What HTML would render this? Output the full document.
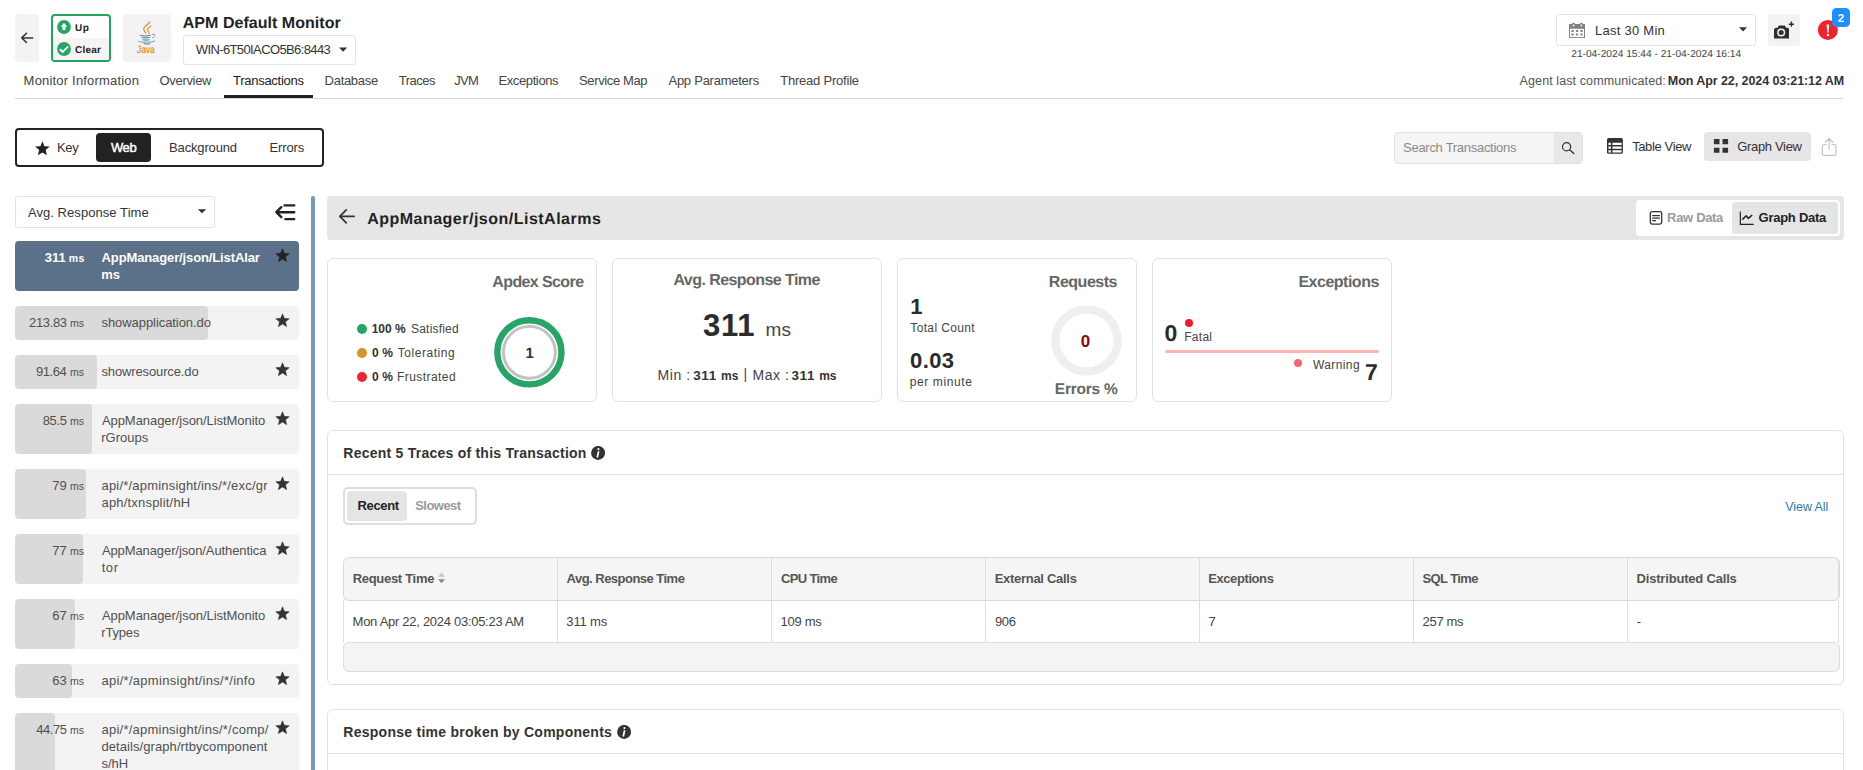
<!DOCTYPE html>
<html lang="en">
<head>
<meta charset="utf-8">
<title>APM Default Monitor - Transactions</title>
<style>
html,body{margin:0;padding:0;background:#fff;}
body{width:1863px;height:770px;overflow:hidden;position:relative;font-family:"Liberation Sans",Arial,sans-serif;font-size:13px;color:#333;}
#root{position:absolute;left:0;top:0;width:1863px;height:770px;overflow:hidden;background:#fff;}
#root div,#root span,#root svg{position:absolute;box-sizing:border-box;}
header,nav,aside,main,section{display:block;}
.t{white-space:nowrap;line-height:20px;height:20px;}
.box{border:1px solid #e3e3e3;border-radius:3px;background:#fff;}
.grey{background:#f3f3f3;border-radius:3px;}
.card{border:1px solid #e2e2e2;border-radius:6px;background:#fff;}
.item{background:#f3f3f3;border-radius:4px;overflow:hidden;}
.item .bar{left:0;top:0;bottom:0;background:#dadada;border-radius:4px;}
.item.sel{background:#5a7189;}
.dot{border-radius:50%;}
.vline{width:1px;background:#ddd;}
.hline{height:1px;background:#ddd;}

</style>
</head>
<body>
<div id="root">

<header>
  <!-- back button -->
  <div class="grey" style="left:15px;top:14px;width:24px;height:48px;"></div>
  <svg style="left:20px;top:31px;" width="14" height="14" viewBox="0 0 14 14"><path d="M12.700 6.900H2M6.500 2.300L1.700 6.900l4.800 4.600" fill="none" stroke="#333" stroke-width="1.500" stroke-linecap="round" stroke-linejoin="round"/></svg>

  <!-- status box -->
  <div style="left:51px;top:14px;width:60px;height:48px;border:2px solid #21a55e;border-radius:4px;background:#fff;overflow:hidden;">
    <div style="left:0;top:22px;width:56px;height:22px;background:#f4f4f4;"></div>
  </div>
  <svg style="left:57px;top:20px;" width="14" height="14" viewBox="0 0 14 14"><circle cx="7" cy="7" r="6.9" fill="#27a565"/><path d="M7 2.9l3.3 3.6H8.5v3.6h-3V6.5H3.7z" fill="#fff"/></svg>
  <svg style="left:57px;top:42px;" width="14" height="14" viewBox="0 0 14 14"><circle cx="7" cy="7" r="6.9" fill="#27a565"/><path d="M2.900 7.300l2.800 2.700 5.500-5.600" fill="none" stroke="#fff" stroke-width="1.900"/></svg>

  <!-- java logo -->
  <div class="grey" style="left:123px;top:14px;width:48px;height:48px;border-radius:4px;"></div>
  <svg style="left:135px;top:20px;" width="24" height="26" viewBox="0 0 24 26">
    <path d="M14.700 1.900C13.600 4.600 8.500 6.300 8.700 9.300c.100 1.700 2 2.400 1.900 3.900" fill="none" stroke="#e8912a" stroke-width="1.300" stroke-linecap="round"/>
    <path d="M16 6.100c-2 1.200-3.800 2.500-3.400 4.100.300 1.200 1.600 2 1.300 3.400" fill="none" stroke="#e8912a" stroke-width="1.200" stroke-linecap="round"/>
    <path d="M5.300 15.300c2.800.700 7.400.700 10.100-.100M7 17.500c2.300.500 5.400.500 7.700 0M8 19.700c1.900.500 4.100.500 6 0M9 23.700c1.900.400 4.100.400 6 0" fill="none" stroke="#4f86a8" stroke-width="1.100" stroke-linecap="round"/>
    <path d="M3.300 21.300c3 1.300 13 1.400 16.400-.200M17.400 14.300c3-1 3.800 1.700.100 3.500" fill="none" stroke="#6aa0a8" stroke-width="1" stroke-linecap="round"/>
  </svg>

  <!-- host dropdown -->
  <div class="box" style="left:183px;top:35px;width:173px;height:30px;"></div>
  <svg style="left:338px;top:47px;" width="10" height="6" viewBox="0 0 10 6"><path d="M1 .5h8.200L5.100 4.700z" fill="#333"/></svg>

  <!-- date dropdown -->
  <div class="box" style="left:1556px;top:14px;width:200px;height:32px;"></div>
  <svg style="left:1569px;top:23px;" width="16" height="15" viewBox="0 0 16 15">
    <path d="M0 1h3.200V0h2.800v1h5V0h2.800v1H16v14H0z" fill="#828282"/>
    <rect x="1" y="5.800" width="14" height="8.300" fill="#fff"/>
    <circle cx="4.600" cy="2.400" r=".900" fill="#fff"/><circle cx="12.400" cy="2.400" r=".900" fill="#fff"/>
    <path d="M2.400 7h2.300v2.100H2.400zM6.900 7h2.300v2.100H6.900zM11.400 7h2.300v2.100h-2.300zM2.400 10.500h2.300v2.100H2.400zM6.900 10.500h2.300v2.100H6.900zM11.400 10.500h2.300v2.100h-2.300z" fill="#868686"/>
  </svg>
  <svg style="left:1738px;top:27px;" width="10" height="6" viewBox="0 0 10 6"><path d="M1 .300h8L5 4.600z" fill="#333"/></svg>

  <!-- camera button -->
  <div class="grey" style="left:1768px;top:14px;width:32px;height:32px;"></div>
  <svg style="left:1773px;top:21px;" width="22" height="19" viewBox="0 0 22 19">
    <path d="M1 8.300l1.600-1.500h2L5.800 4.400h6l1.300 2.400H15.100l.900.900v9.900H1z" fill="#2e2e2e"/>
    <circle cx="8.200" cy="11.500" r="4" fill="#f3f3f3"/><circle cx="8.200" cy="11.500" r="2.500" fill="#2e2e2e"/>
    <path d="M18.400.600v5.200M15.800 3.200H21" stroke="#2e2e2e" stroke-width="1.400"/>
  </svg>

  <!-- alarm bubble -->
  <svg style="left:1816px;top:18px;" width="24" height="24" viewBox="0 0 24 24"><circle cx="11.900" cy="11.900" r="10" fill="#f0222e"/><path d="M10.600 6.600h2.600l-.650 7.800h-1.300z" fill="#fff"/><circle cx="11.900" cy="16.900" r="1.250" fill="#fff"/></svg>
  <div style="left:1832px;top:8px;width:18px;height:19px;border-radius:4.500px;background:#1e90ff;"></div>
  <span class="t" style="left:182.78px;top:14px;font-size:16px;color:#222;font-weight:700;letter-spacing:0.035px;text-rendering:geometricPrecision;">APM Default Monitor</span>
  <span class="t" style="left:195.82px;top:40px;font-size:13px;color:#333;letter-spacing:-0.618px;">WIN-6T50IACO5B6:8443</span>
  <span class="t" style="left:74.88px;top:19px;font-size:10px;color:#222;font-weight:700;letter-spacing:0.715px;text-rendering:geometricPrecision;">Up</span>
  <span class="t" style="left:75.09px;top:41px;font-size:10px;color:#222;font-weight:700;letter-spacing:0.215px;text-rendering:geometricPrecision;">Clear</span>
  <span class="t" style="left:137.30px;top:40px;font-size:10.5px;color:#e8931c;letter-spacing:-0.017px;text-rendering:geometricPrecision;transform:scaleX(.800);transform-origin:0 0;-webkit-text-stroke:.300px #e8931c;">Java</span>
  <span class="t" style="left:1595.11px;top:21px;font-size:13px;color:#333;letter-spacing:0.248px;">Last 30 Min</span>
  <span class="t" style="left:1571.22px;top:45px;font-size:10.2px;color:#444;text-rendering:geometricPrecision;">21-04-2024 15:44 - 21-04-2024 16:14</span>
  <span class="t" style="left:1837.72px;top:8px;font-size:11.5px;color:#fff;font-weight:700;">2</span>
</header>

<nav>
  <div class="hline" style="left:15px;top:98px;width:1828px;background:#d9d9d9;"></div>
  <div style="left:224px;top:95px;width:89px;height:3px;background:#222;"></div>
  <span class="t" style="left:23.61px;top:71px;font-size:13px;color:#444;letter-spacing:0.189px;">Monitor Information</span>
  <span class="t" style="left:159.44px;top:71px;font-size:13px;color:#444;letter-spacing:-0.301px;">Overview</span>
  <span class="t" style="left:233.04px;top:71px;font-size:13px;color:#222;letter-spacing:-0.278px;">Transactions</span>
  <span class="t" style="left:324.61px;top:71px;font-size:13px;color:#444;letter-spacing:-0.301px;">Database</span>
  <span class="t" style="left:398.84px;top:71px;font-size:13px;color:#444;letter-spacing:-0.525px;">Traces</span>
  <span class="t" style="left:454.25px;top:71px;font-size:13px;color:#444;letter-spacing:-0.699px;">JVM</span>
  <span class="t" style="left:498.41px;top:71px;font-size:13px;color:#444;letter-spacing:-0.379px;">Exceptions</span>
  <span class="t" style="left:579.09px;top:71px;font-size:13px;color:#444;letter-spacing:-0.382px;">Service Map</span>
  <span class="t" style="left:668.48px;top:71px;font-size:13px;color:#444;letter-spacing:-0.251px;">App Parameters</span>
  <span class="t" style="left:780.24px;top:71px;font-size:13px;color:#444;letter-spacing:-0.215px;">Thread Profile</span>
  <span class="t" style="left:1519.58px;top:71px;font-size:12.5px;color:#555;letter-spacing:0.102px;">Agent last communicated:</span>
  <span class="t" style="left:1667.86px;top:71px;font-size:12.5px;color:#333;font-weight:700;letter-spacing:-0.075px;">Mon Apr 22, 2024 03:21:12 AM</span>
</nav>

<section>
  <!-- filter group -->
  <div style="left:15px;top:128px;width:309px;height:39px;border:2px solid #222;border-radius:4px;background:#fff;"></div>
  <div style="left:96px;top:133px;width:55px;height:29px;border-radius:4px;background:#222;"></div>
  <svg style="left:33.800px;top:139.800px;" width="16.800" height="16.800" viewBox="0 0 16 16"><path d="M8 1.200l1.900 4.700 5.100.4-3.900 3.300 1.200 4.900L8 11.900l-4.300 2.600 1.200-4.900L1 6.300l5.100-.4z" fill="#222"/></svg>

  <!-- search -->
  <div style="left:1394px;top:132px;width:189px;height:32px;border:1px solid #e0e0e0;border-radius:4px;background:#f5f5f5;overflow:hidden;">
    <div style="left:159px;top:0;width:29px;height:30px;background:#e8e8e8;"></div>
  </div>
  <svg style="left:1561px;top:141px;" width="15" height="15" viewBox="0 0 15 15"><circle cx="5.600" cy="5.700" r="4.100" fill="none" stroke="#333" stroke-width="1.200"/><path d="M8.600 8.700l4.200 3.900" stroke="#333" stroke-width="1.300" stroke-linecap="round"/></svg>

  <!-- table view -->
  <svg style="left:1607px;top:138px;" width="16" height="16" viewBox="0 0 16 16"><rect x="0" y="0" width="15.900" height="15.800" rx="1.600" fill="#333"/><path d="M1.400 4.700h2.500v2.300H1.400zM5.400 4.700h9.200v2.300H5.400zM1.400 8.500h2.500v2.300H1.400zM5.400 8.500h9.200v2.300H5.400zM1.400 12.200h2.500v2.300H1.400zM5.400 12.200h9.200v2.300H5.400z" fill="#fff"/></svg>
  <!-- graph view -->
  <div style="left:1704px;top:132px;width:107px;height:29px;border-radius:4px;background:#e6e6e6;"></div>
  <svg style="left:1713px;top:138px;" width="16" height="16" viewBox="0 0 16 16"><path d="M.900 1.100h5.600v5.100H.900zM9.500 1.100h5.600v5.100H9.500zM.900 9.700h5.600v5.100H.900zM9.500 9.700h5.600v5.100H9.500z" fill="#333"/></svg>
  <!-- share -->
  <svg style="left:1821px;top:137px;" width="17" height="20" viewBox="0 0 17 20"><path d="M5.200 7.500H2.900c-.800 0-1.500.700-1.500 1.500v7.900c0 .800.700 1.500 1.500 1.500h10.500c.800 0 1.500-.700 1.500-1.500V9c0-.800-.700-1.500-1.500-1.500h-2.300M8.100 12.300V1.700M4.400 5.400l3.700-3.900 3.700 3.900" fill="none" stroke="#c2c2c2" stroke-width="1.200" stroke-linecap="round" stroke-linejoin="round"/></svg>
  <span class="t" style="left:56.91px;top:138px;font-size:13px;color:#333;letter-spacing:-0.255px;">Key</span>
  <span class="t" style="left:110.89px;top:138px;font-size:13px;color:#fff;letter-spacing:-0.331px;-webkit-text-stroke:.450px #fff;">Web</span>
  <span class="t" style="left:169.11px;top:138px;font-size:13px;color:#333;letter-spacing:-0.160px;">Background</span>
  <span class="t" style="left:269.51px;top:138px;font-size:13px;color:#333;letter-spacing:-0.127px;">Errors</span>
  <span class="t" style="left:1403.09px;top:138px;font-size:13px;color:#8a8a8a;letter-spacing:-0.286px;">Search Transactions</span>
  <span class="t" style="left:1632.14px;top:137px;font-size:13px;color:#333;letter-spacing:-0.372px;">Table View</span>
  <span class="t" style="left:1737.21px;top:137px;font-size:13px;color:#333;letter-spacing:-0.329px;">Graph View</span>
</section>

<aside>
  <div class="box" style="left:15px;top:196px;width:200px;height:32px;"></div>
  <svg style="left:197px;top:209px;" width="10" height="6" viewBox="0 0 10 6"><path d="M.800.300h8.400L5 4.300z" fill="#333"/></svg>
  <svg style="left:274px;top:203px;" width="23" height="19" viewBox="0 0 23 19"><path d="M10.600 2.400h9.600M2.600 9.200h17.600M11.400 16.100h8.800M7.300 4.200L2.300 9.200l5 5" fill="none" stroke="#222" stroke-width="2.400" stroke-linecap="round" stroke-linejoin="round"/></svg>

  <div class="item sel" style="left:15px;top:241px;width:284px;height:50px;"></div>
  <svg style="left:275.200px;top:248.2px;" width="15" height="15" viewBox="0 0 15 15"><path d="M7.50 0.80L9.35 5.35L14.25 5.71L10.50 8.87L11.67 13.64L7.50 11.05L3.33 13.64L4.50 8.87L0.75 5.71L5.65 5.35z" fill="#222" stroke="#222" stroke-width=".500" stroke-linejoin="round"/></svg>
  <div class="item" style="left:15px;top:306px;width:284px;height:33.6px;"><div class="bar" style="width:192.8px;"></div></div>
  <svg style="left:275.200px;top:313.2px;" width="15" height="15" viewBox="0 0 15 15"><path d="M7.50 0.80L9.35 5.35L14.25 5.71L10.50 8.87L11.67 13.64L7.50 11.05L3.33 13.64L4.50 8.87L0.75 5.71L5.65 5.35z" fill="#333" stroke="#333" stroke-width=".500" stroke-linejoin="round"/></svg>
  <div class="item" style="left:15px;top:355.2px;width:284px;height:33.5px;"><div class="bar" style="width:81.8px;"></div></div>
  <svg style="left:275.200px;top:362.4px;" width="15" height="15" viewBox="0 0 15 15"><path d="M7.50 0.80L9.35 5.35L14.25 5.71L10.50 8.87L11.67 13.64L7.50 11.05L3.33 13.64L4.50 8.87L0.75 5.71L5.65 5.35z" fill="#333" stroke="#333" stroke-width=".500" stroke-linejoin="round"/></svg>
  <div class="item" style="left:15px;top:404.2px;width:284px;height:49.6px;"><div class="bar" style="width:76.7px;"></div></div>
  <svg style="left:275.200px;top:411.4px;" width="15" height="15" viewBox="0 0 15 15"><path d="M7.50 0.80L9.35 5.35L14.25 5.71L10.50 8.87L11.67 13.64L7.50 11.05L3.33 13.64L4.50 8.87L0.75 5.71L5.65 5.35z" fill="#333" stroke="#333" stroke-width=".500" stroke-linejoin="round"/></svg>
  <div class="item" style="left:15px;top:469.2px;width:284px;height:49.6px;"><div class="bar" style="width:70.7px;"></div></div>
  <svg style="left:275.200px;top:476.4px;" width="15" height="15" viewBox="0 0 15 15"><path d="M7.50 0.80L9.35 5.35L14.25 5.71L10.50 8.87L11.67 13.64L7.50 11.05L3.33 13.64L4.50 8.87L0.75 5.71L5.65 5.35z" fill="#333" stroke="#333" stroke-width=".500" stroke-linejoin="round"/></svg>
  <div class="item" style="left:15px;top:534.2px;width:284px;height:49.6px;"><div class="bar" style="width:67.6px;"></div></div>
  <svg style="left:275.200px;top:541.4px;" width="15" height="15" viewBox="0 0 15 15"><path d="M7.50 0.80L9.35 5.35L14.25 5.71L10.50 8.87L11.67 13.64L7.50 11.05L3.33 13.64L4.50 8.87L0.75 5.71L5.65 5.35z" fill="#333" stroke="#333" stroke-width=".500" stroke-linejoin="round"/></svg>
  <div class="item" style="left:15px;top:599.2px;width:284px;height:49.6px;"><div class="bar" style="width:59.8px;"></div></div>
  <svg style="left:275.200px;top:606.4px;" width="15" height="15" viewBox="0 0 15 15"><path d="M7.50 0.80L9.35 5.35L14.25 5.71L10.50 8.87L11.67 13.64L7.50 11.05L3.33 13.64L4.50 8.87L0.75 5.71L5.65 5.35z" fill="#333" stroke="#333" stroke-width=".500" stroke-linejoin="round"/></svg>
  <div class="item" style="left:15px;top:664.2px;width:284px;height:33.6px;"><div class="bar" style="width:56.7px;"></div></div>
  <svg style="left:275.200px;top:671.4px;" width="15" height="15" viewBox="0 0 15 15"><path d="M7.50 0.80L9.35 5.35L14.25 5.71L10.50 8.87L11.67 13.64L7.50 11.05L3.33 13.64L4.50 8.87L0.75 5.71L5.65 5.35z" fill="#333" stroke="#333" stroke-width=".500" stroke-linejoin="round"/></svg>
  <div class="item" style="left:15px;top:713.2px;width:284px;height:66.6px;"><div class="bar" style="width:39.5px;"></div></div>
  <svg style="left:275.200px;top:720.4px;" width="15" height="15" viewBox="0 0 15 15"><path d="M7.50 0.80L9.35 5.35L14.25 5.71L10.50 8.87L11.67 13.64L7.50 11.05L3.33 13.64L4.50 8.87L0.75 5.71L5.65 5.35z" fill="#333" stroke="#333" stroke-width=".500" stroke-linejoin="round"/></svg>
  <div style="left:311px;top:196px;width:4px;height:580px;border-radius:2px;background:#7799b8;"></div>
  <span class="t" style="left:27.88px;top:203px;font-size:13px;color:#333;letter-spacing:0.066px;">Avg. Response Time</span>
  <span class="t" style="left:44.74px;top:248px;font-size:13px;color:#fff;font-weight:700;letter-spacing:0.059px;">311</span>
  <span class="t" style="left:68.77px;top:248px;font-size:10.5px;color:#fff;font-weight:700;letter-spacing:0.309px;">ms</span>
  <span class="t" style="left:101.61px;top:248px;font-size:13px;color:#fff;font-weight:700;letter-spacing:-0.126px;">AppManager/json/ListAlar</span>
  <span class="t" style="left:101.22px;top:265px;font-size:13px;color:#fff;font-weight:700;letter-spacing:-0.091px;">ms</span>
  <span class="t" style="left:29.11px;top:313px;font-size:13px;color:#505050;letter-spacing:-0.374px;">213.83</span>
  <span class="t" style="left:69.95px;top:313px;font-size:10.5px;color:#505050;letter-spacing:0.187px;">ms</span>
  <span class="t" style="left:101.48px;top:313px;font-size:13px;color:#505050;letter-spacing:-0.065px;">showapplication.do</span>
  <span class="t" style="left:36.00px;top:362px;font-size:13px;color:#505050;letter-spacing:-0.473px;">91.64</span>
  <span class="t" style="left:69.95px;top:362px;font-size:10.5px;color:#505050;letter-spacing:0.187px;">ms</span>
  <span class="t" style="left:101.48px;top:362px;font-size:13px;color:#505050;letter-spacing:-0.130px;">showresource.do</span>
  <span class="t" style="left:42.68px;top:411px;font-size:13px;color:#505050;letter-spacing:-0.357px;">85.5</span>
  <span class="t" style="left:69.95px;top:411px;font-size:10.5px;color:#505050;letter-spacing:0.187px;">ms</span>
  <span class="t" style="left:101.88px;top:411px;font-size:13px;color:#505050;letter-spacing:-0.052px;">AppManager/json/ListMonito</span>
  <span class="t" style="left:101.22px;top:428px;font-size:13px;color:#505050;letter-spacing:0.008px;">rGroups</span>
  <span class="t" style="left:52.21px;top:476px;font-size:13px;color:#505050;letter-spacing:0.146px;">79</span>
  <span class="t" style="left:69.95px;top:476px;font-size:10.5px;color:#505050;letter-spacing:0.187px;">ms</span>
  <span class="t" style="left:101.48px;top:476px;font-size:13px;color:#505050;letter-spacing:0.200px;">api/*/apminsight/ins/*/exc/gr</span>
  <span class="t" style="left:101.48px;top:493px;font-size:13px;color:#505050;letter-spacing:0.198px;">aph/txnsplit/hH</span>
  <span class="t" style="left:52.21px;top:541px;font-size:13px;color:#505050;letter-spacing:0.161px;">77</span>
  <span class="t" style="left:69.95px;top:541px;font-size:10.5px;color:#505050;letter-spacing:0.187px;">ms</span>
  <span class="t" style="left:101.88px;top:541px;font-size:13px;color:#505050;letter-spacing:-0.095px;">AppManager/json/Authentica</span>
  <span class="t" style="left:101.73px;top:558px;font-size:13px;color:#505050;letter-spacing:0.539px;">tor</span>
  <span class="t" style="left:52.21px;top:606px;font-size:13px;color:#505050;letter-spacing:0.161px;">67</span>
  <span class="t" style="left:69.95px;top:606px;font-size:10.5px;color:#505050;letter-spacing:0.187px;">ms</span>
  <span class="t" style="left:101.88px;top:606px;font-size:13px;color:#505050;letter-spacing:-0.052px;">AppManager/json/ListMonito</span>
  <span class="t" style="left:101.22px;top:623px;font-size:13px;color:#505050;letter-spacing:-0.165px;">rTypes</span>
  <span class="t" style="left:52.21px;top:671px;font-size:13px;color:#505050;letter-spacing:0.120px;">63</span>
  <span class="t" style="left:69.95px;top:671px;font-size:10.5px;color:#505050;letter-spacing:0.187px;">ms</span>
  <span class="t" style="left:101.48px;top:671px;font-size:13px;color:#505050;letter-spacing:0.289px;">api/*/apminsight/ins/*/info</span>
  <span class="t" style="left:36.34px;top:720px;font-size:13px;color:#505050;letter-spacing:-0.484px;">44.75</span>
  <span class="t" style="left:69.95px;top:720px;font-size:10.5px;color:#505050;letter-spacing:0.187px;">ms</span>
  <span class="t" style="left:101.48px;top:720px;font-size:13px;color:#505050;letter-spacing:0.238px;">api/*/apminsight/ins/*/comp/</span>
  <span class="t" style="left:101.51px;top:737px;font-size:13px;color:#505050;letter-spacing:0.073px;">details/graph/rtbycomponent</span>
  <span class="t" style="left:101.48px;top:754px;font-size:13px;color:#505050;letter-spacing:0.021px;">s/hH</span>
</aside>

<main>
  <!-- title bar -->
  <div style="left:327px;top:196px;width:1517px;height:44px;border-radius:4px;background:#e6e6e6;"></div>
  <svg style="left:338px;top:208px;" width="18" height="17" viewBox="0 0 18 17"><path d="M16.200 8.300H2M8.300 1.800L1.800 8.300l6.500 6.500" fill="none" stroke="#333" stroke-width="1.700" stroke-linecap="round" stroke-linejoin="round"/></svg>
  <div style="left:1636px;top:200px;width:204px;height:36px;border-radius:4px;background:#fff;"></div>
  <div style="left:1732px;top:202px;width:106px;height:32px;border-radius:3px;background:#e4e6e6;"></div>
  <svg style="left:1649px;top:210px;" width="14" height="16" viewBox="0 0 14 16"><rect x="1.300" y="1.600" width="11.400" height="12.500" rx="1.800" fill="none" stroke="#333" stroke-width="1.300"/><path d="M3.200 5.600h7.700M3.200 8.100h7.700M3.200 10.600h3.800" stroke="#333" stroke-width="1.200"/></svg>
  <svg style="left:1739px;top:211px;" width="16" height="15" viewBox="0 0 16 15"><path d="M1.350.400v13H14.700" fill="none" stroke="#222" stroke-width="1.200"/><path d="M3.300 8.600l3.900-3.900 2.200 2.700 3.800-3.400" fill="none" stroke="#222" stroke-width="1.500" stroke-linejoin="round"/></svg>

  <!-- cards -->
  <div class="card" style="left:327px;top:258px;width:270px;height:144px;"></div>
  <div class="card" style="left:612px;top:258px;width:270px;height:144px;"></div>
  <div class="card" style="left:897px;top:258px;width:240px;height:144px;"></div>
  <div class="card" style="left:1152px;top:258px;width:240px;height:144px;"></div>

  <!-- apdex -->
  <div class="dot" style="left:357px;top:324px;width:10px;height:10px;background:#27a567;"></div>
  <div class="dot" style="left:357px;top:348px;width:10px;height:10px;background:#d8922a;"></div>
  <div class="dot" style="left:357px;top:372px;width:10px;height:10px;background:#ee2233;"></div>
  <svg style="left:493px;top:316px;" width="73" height="73" viewBox="0 0 73 73"><circle cx="36.400" cy="36.300" r="32.100" fill="none" stroke="#27a567" stroke-width="6.400"/><circle cx="36.400" cy="36.300" r="25.900" fill="none" stroke="#c2c2c2" stroke-width="2.900"/></svg>

  <!-- requests ring -->
  <svg style="left:1050px;top:304px;" width="73" height="73" viewBox="0 0 73 73"><circle cx="36.500" cy="36.400" r="31.100" fill="none" stroke="#efefef" stroke-width="8.300"/></svg>

  <!-- exceptions -->
  <div class="dot" style="left:1185px;top:319px;width:8px;height:8px;background:#ee1c2c;"></div>
  <div style="left:1165px;top:350px;width:214px;height:3px;border-radius:2px;background:#ffb3b3;"></div>
  <div class="dot" style="left:1294px;top:359px;width:8px;height:8px;background:#f4696b;"></div>

  <!-- traces panel -->
  <div class="card" style="left:327px;top:430px;width:1517px;height:255px;border-radius:6px;"></div>
  <div class="hline" style="left:328px;top:474px;width:1515px;background:#e2e2e2;"></div>
  <svg style="left:591px;top:446px;" width="14.200" height="14" viewBox="0 0 14.200 14"><circle cx="7.100" cy="6.900" r="7" fill="#333"/><circle cx="7.450" cy="3.100" r="1.050" fill="#fff"/><path d="M7.650 5.300L6.250 11.500" stroke="#fff" stroke-width="1.700"/></svg>
  <div style="left:343px;top:487px;width:134px;height:38px;border:2px solid #dedede;border-radius:5px;background:#fff;"></div>
  <div style="left:347px;top:491px;width:60px;height:30px;border-radius:4px;background:#e4e6e6;"></div>

  <!-- table -->
  <div style="left:343px;top:600px;width:1496px;height:43px;border-left:1px solid #dcdcdc;border-right:1px solid #dcdcdc;background:#fff;"></div>
  <div style="left:343px;top:557px;width:1497px;height:44px;border:1px solid #dadada;border-right:2px solid #dcdcdc;border-radius:6px;background:#f5f5f5;"></div>
  <div style="left:343px;top:642px;width:1497px;height:30px;border:1px solid #dcdcdc;border-radius:6px;background:#f4f4f4;"></div>
  <div class="vline" style="left:557px;top:558px;height:84px;"></div>
  <div class="vline" style="left:771px;top:558px;height:84px;"></div>
  <div class="vline" style="left:985px;top:558px;height:84px;"></div>
  <div class="vline" style="left:1199px;top:558px;height:84px;"></div>
  <div class="vline" style="left:1413px;top:558px;height:84px;"></div>
  <div class="vline" style="left:1627px;top:558px;height:84px;"></div>
  <svg style="left:437px;top:572px;" width="9" height="12" viewBox="0 0 9 12"><path d="M1 4.800L4.500.800 8 4.800z" fill="#c4c4c4"/><path d="M1 7.200l3.500 4 3.500-4z" fill="#8a8a8a"/></svg>

  <!-- components panel -->
  <div class="card" style="left:327px;top:709px;width:1517px;height:100px;border-radius:6px;"></div>
  <div class="hline" style="left:328px;top:753px;width:1515px;background:#e2e2e2;"></div>
  <svg style="left:616.600px;top:725px;" width="14.200" height="14" viewBox="0 0 14.200 14"><circle cx="7.100" cy="6.900" r="7" fill="#333"/><circle cx="7.450" cy="3.100" r="1.050" fill="#fff"/><path d="M7.650 5.300L6.250 11.500" stroke="#fff" stroke-width="1.700"/></svg>
  <span class="t" style="left:367.18px;top:210px;font-size:16px;color:#222;font-weight:700;letter-spacing:0.490px;text-rendering:geometricPrecision;">AppManager/json/ListAlarms</span>
  <span class="t" style="left:1667.12px;top:208px;font-size:13px;color:#9a9a9a;font-weight:700;letter-spacing:-0.327px;">Raw Data</span>
  <span class="t" style="left:1758.55px;top:208px;font-size:13px;color:#222;font-weight:700;letter-spacing:-0.261px;">Graph Data</span>
  <span class="t" style="left:492.28px;top:273px;font-size:16px;color:#666;font-weight:700;letter-spacing:-0.605px;text-rendering:geometricPrecision;">Apdex Score</span>
  <span class="t" style="left:371.63px;top:319px;font-size:12px;color:#333;font-weight:700;letter-spacing:0.029px;">100 %</span>
  <span class="t" style="left:411.06px;top:319px;font-size:12px;color:#444;letter-spacing:0.200px;">Satisfied</span>
  <span class="t" style="left:371.92px;top:343px;font-size:12px;color:#333;font-weight:700;letter-spacing:0.118px;">0 %</span>
  <span class="t" style="left:397.78px;top:343px;font-size:12px;color:#444;letter-spacing:0.532px;">Tolerating</span>
  <span class="t" style="left:371.92px;top:367px;font-size:12px;color:#333;font-weight:700;letter-spacing:0.118px;">0 %</span>
  <span class="t" style="left:397.05px;top:367px;font-size:12px;color:#444;letter-spacing:0.432px;">Frustrated</span>
  <span class="t" style="left:525.39px;top:344px;font-size:15px;color:#333;font-weight:700;text-rendering:geometricPrecision;">1</span>
  <span class="t" style="left:673.48px;top:271px;font-size:16px;color:#666;font-weight:700;letter-spacing:-0.567px;text-rendering:geometricPrecision;">Avg. Response Time</span>
  <span class="t" style="left:702.95px;top:316px;font-size:31px;color:#2b2b2b;font-weight:700;letter-spacing:0.811px;">311</span>
  <span class="t" style="left:765.44px;top:320px;font-size:19px;color:#444;letter-spacing:0.288px;">ms</span>
  <span class="t" style="left:657.38px;top:365px;font-size:14px;color:#444;letter-spacing:0.636px;">Min :</span>
  <span class="t" style="left:693.31px;top:366px;font-size:13.5px;color:#333;font-weight:700;letter-spacing:0.548px;">311</span>
  <span class="t" style="left:720.97px;top:366px;font-size:12px;color:#333;font-weight:700;letter-spacing:0.060px;">ms</span>
  <span class="t" style="left:743.48px;top:364px;font-size:14px;color:#444;">|</span>
  <span class="t" style="left:752.48px;top:365px;font-size:14px;color:#444;letter-spacing:0.543px;">Max :</span>
  <span class="t" style="left:791.41px;top:366px;font-size:13.5px;color:#333;font-weight:700;letter-spacing:0.625px;">311</span>
  <span class="t" style="left:819.27px;top:366px;font-size:12px;color:#333;font-weight:700;letter-spacing:-0.140px;">ms</span>
  <span class="t" style="left:1048.81px;top:273px;font-size:16px;color:#666;font-weight:700;letter-spacing:-0.474px;text-rendering:geometricPrecision;">Requests</span>
  <span class="t" style="left:910.13px;top:297px;font-size:22px;color:#2b2b2b;font-weight:700;">1</span>
  <span class="t" style="left:910.28px;top:318px;font-size:12px;color:#444;letter-spacing:0.367px;">Total Count</span>
  <span class="t" style="left:910.02px;top:351px;font-size:22px;color:#2b2b2b;font-weight:700;letter-spacing:0.399px;">0.03</span>
  <span class="t" style="left:909.70px;top:372px;font-size:12px;color:#444;letter-spacing:0.616px;">per minute</span>
  <span class="t" style="left:1080.87px;top:332px;font-size:17px;color:#990000;font-weight:700;">0</span>
  <span class="t" style="left:1054.82px;top:380px;font-size:15.5px;color:#666;font-weight:700;letter-spacing:-0.238px;text-rendering:geometricPrecision;">Errors %</span>
  <span class="t" style="left:1298.41px;top:273px;font-size:16px;color:#666;font-weight:700;letter-spacing:-0.494px;text-rendering:geometricPrecision;">Exceptions</span>
  <span class="t" style="left:1164.39px;top:323px;font-size:23px;color:#2b2b2b;font-weight:700;text-rendering:geometricPrecision;">0</span>
  <span class="t" style="left:1184.25px;top:327px;font-size:12px;color:#444;letter-spacing:0.263px;">Fatal</span>
  <span class="t" style="left:1312.93px;top:355px;font-size:12px;color:#444;letter-spacing:0.404px;">Warning</span>
  <span class="t" style="left:1364.95px;top:362px;font-size:23px;color:#2b2b2b;font-weight:700;text-rendering:geometricPrecision;">7</span>
  <span class="t" style="left:343.29px;top:443px;font-size:14px;color:#333;font-weight:700;letter-spacing:0.240px;">Recent 5 Traces of this Transaction</span>
  <span class="t" style="left:357.52px;top:496px;font-size:13px;color:#222;font-weight:700;letter-spacing:-0.349px;">Recent</span>
  <span class="t" style="left:415.24px;top:496px;font-size:13px;color:#9a9a9a;font-weight:700;letter-spacing:-0.547px;">Slowest</span>
  <span class="t" style="left:1785.35px;top:497px;font-size:12.5px;color:#2a7ab0;letter-spacing:-0.088px;">View All</span>
  <span class="t" style="left:352.72px;top:569px;font-size:13px;color:#555;font-weight:700;letter-spacing:-0.303px;">Request Time</span>
  <span class="t" style="left:566.61px;top:569px;font-size:13px;color:#555;font-weight:700;letter-spacing:-0.523px;">Avg. Response Time</span>
  <span class="t" style="left:780.95px;top:569px;font-size:13px;color:#555;font-weight:700;letter-spacing:-0.638px;">CPU Time</span>
  <span class="t" style="left:994.72px;top:569px;font-size:13px;color:#555;font-weight:700;letter-spacing:-0.294px;">External Calls</span>
  <span class="t" style="left:1208.22px;top:569px;font-size:13px;color:#555;font-weight:700;letter-spacing:-0.411px;">Exceptions</span>
  <span class="t" style="left:1422.54px;top:569px;font-size:13px;color:#555;font-weight:700;letter-spacing:-0.620px;">SQL Time</span>
  <span class="t" style="left:1636.52px;top:569px;font-size:13px;color:#555;font-weight:700;letter-spacing:-0.186px;">Distributed Calls</span>
  <span class="t" style="left:352.61px;top:612px;font-size:13px;color:#444;letter-spacing:-0.285px;">Mon Apr 22, 2024 03:05:23 AM</span>
  <span class="t" style="left:566.34px;top:612px;font-size:13px;color:#444;letter-spacing:-0.159px;">311 ms</span>
  <span class="t" style="left:780.55px;top:612px;font-size:13px;color:#444;letter-spacing:-0.281px;">109 ms</span>
  <span class="t" style="left:994.90px;top:612px;font-size:13px;color:#444;letter-spacing:-0.313px;">906</span>
  <span class="t" style="left:1208.41px;top:612px;font-size:13px;color:#444;">7</span>
  <span class="t" style="left:1422.61px;top:612px;font-size:13px;color:#444;letter-spacing:-0.332px;">257 ms</span>
  <span class="t" style="left:1636.77px;top:612px;font-size:13px;color:#444;">-</span>
  <span class="t" style="left:343.29px;top:722px;font-size:14px;color:#333;font-weight:700;letter-spacing:0.266px;">Response time broken by Components</span>
</main>

</div>

</body>
</html>
